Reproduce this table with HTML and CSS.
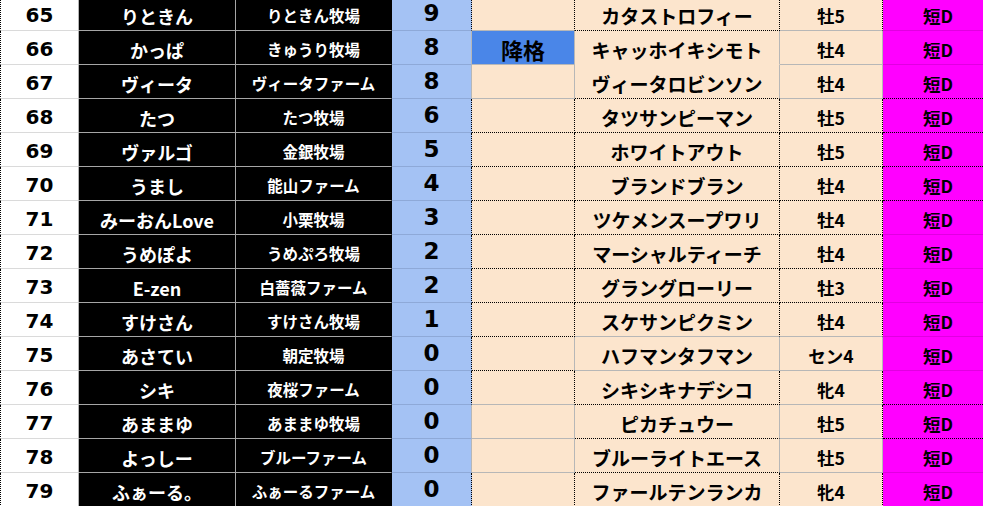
FILE: index.html
```html
<!DOCTYPE html>
<html lang="ja">
<head>
<meta charset="utf-8">
<title>Ranking</title>
<link rel="stylesheet" href="styles.css">
</head>
<body>
<div class="sheet">
  <div class="c num">65</div><div class="c name">りときん</div><div class="c farm">りときん牧場</div><div class="c pts rd">9</div><div class="c st bg rd"></div><div class="c horse bd rd">カタストロフィー</div><div class="c sex bg rd">牡5</div><div class="c cls bm">短D</div>
  <div class="c num">66</div><div class="c name">かっぱ</div><div class="c farm">きゅうり牧場</div><div class="c pts rg">8</div><div class="c st demote bg rg">降格</div><div class="c horse bn rg">キャッホイキシモト</div><div class="c sex bg rg">牡4</div><div class="c cls bm">短D</div>
  <div class="c num">67</div><div class="c name">ヴィータ</div><div class="c farm">ヴィータファーム</div><div class="c pts rg">8</div><div class="c st bg rg"></div><div class="c horse bd rg">ヴィータロビンソン</div><div class="c sex bg rg">牡4</div><div class="c cls bd">短D</div>
  <div class="c num">68</div><div class="c name">たつ</div><div class="c farm">たつ牧場</div><div class="c pts rd">6</div><div class="c st bd rd"></div><div class="c horse bd rd">タツサンピーマン</div><div class="c sex bd rd">牡5</div><div class="c cls bd">短D</div>
  <div class="c num">69</div><div class="c name">ヴァルゴ</div><div class="c farm">金銀牧場</div><div class="c pts rd">5</div><div class="c st bd rd"></div><div class="c horse bd rd">ホワイトアウト</div><div class="c sex bd rd">牡5</div><div class="c cls bd">短D</div>
  <div class="c num">70</div><div class="c name">うまし</div><div class="c farm">能山ファーム</div><div class="c pts rd">4</div><div class="c st bd rd"></div><div class="c horse bd rd">ブランドブラン</div><div class="c sex bd rd">牡4</div><div class="c cls bd">短D</div>
  <div class="c num">71</div><div class="c name">みーおんLove</div><div class="c farm">小栗牧場</div><div class="c pts rd">3</div><div class="c st bd rd"></div><div class="c horse bd rd">ツケメンスープワリ</div><div class="c sex bd rd">牡4</div><div class="c cls bm">短D</div>
  <div class="c num">72</div><div class="c name">うめぽよ</div><div class="c farm">うめぷろ牧場</div><div class="c pts rd">2</div><div class="c st bd rd"></div><div class="c horse bd rd">マーシャルティーチ</div><div class="c sex bd rd">牡4</div><div class="c cls bm">短D</div>
  <div class="c num">73</div><div class="c name">E-zen</div><div class="c farm">白薔薇ファーム</div><div class="c pts rd">2</div><div class="c st bd rd"></div><div class="c horse bd rd">グラングローリー</div><div class="c sex bd rd">牡3</div><div class="c cls bm">短D</div>
  <div class="c num">74</div><div class="c name">すけさん</div><div class="c farm">すけさん牧場</div><div class="c pts rd">1</div><div class="c st bd rd"></div><div class="c horse bg rd">スケサンピクミン</div><div class="c sex bg rd">牡4</div><div class="c cls bm">短D</div>
  <div class="c num">75</div><div class="c name">あさてい</div><div class="c farm">朝定牧場</div><div class="c pts rd">0</div><div class="c st bd rg"></div><div class="c horse bg rg">ハフマンタフマン</div><div class="c sex bg rg">セン4</div><div class="c cls bm">短D</div>
  <div class="c num">76</div><div class="c name">シキ</div><div class="c farm">夜桜ファーム</div><div class="c pts rd">0</div><div class="c st bg rd"></div><div class="c horse bd rd">シキシキナデシコ</div><div class="c sex bg rd">牝4</div><div class="c cls bd">短D</div>
  <div class="c num">77</div><div class="c name">あままゆ</div><div class="c farm">あままゆ牧場</div><div class="c pts rg">0</div><div class="c st bg rg"></div><div class="c horse bd rg">ピカチュウー</div><div class="c sex bg rd">牡5</div><div class="c cls bd">短D</div>
  <div class="c num">78</div><div class="c name">よっしー</div><div class="c farm">ブルーファーム</div><div class="c pts rg">0</div><div class="c st bg rg"></div><div class="c horse bd rg">ブルーライトエース</div><div class="c sex bg rg">牡5</div><div class="c cls bm">短D</div>
  <div class="c num">79</div><div class="c name">ふぁーる。</div><div class="c farm">ふぁーるファーム</div><div class="c pts rd">0</div><div class="c st bn rd"></div><div class="c horse bn rd">ファールテンランカ</div><div class="c sex bn rd">牝4</div><div class="c cls bn">短D</div>
</div>
</body>
</html>
```
FILE: styles.css
```css
html, body {
  margin: 0;
  padding: 0;
  background: #ffffff;
  overflow: hidden;
}
body {
  width: 983px;
  height: 506px;
  font-family: "Noto Sans CJK JP", "Noto Sans", sans-serif;
  font-weight: 700;
}
.sheet {
  display: grid;
  grid-template-columns: 79px 157px 156px 80px 103px 205px 103px 110px;
  grid-auto-rows: 34px;
  margin-top: -3px;
}
.c {
  display: flex;
  align-items: center;
  justify-content: center;
  box-sizing: border-box;
  padding-top: 4px;
  line-height: 1;
  white-space: nowrap;
  border-right: 1px solid transparent;
  border-bottom: 1px solid transparent;
  color: #000;
}
.num {
  background: #ffffff;
  border-left: 1px dotted #000;
  border-right: 1px solid #b4b4b4;
  border-bottom: 1px solid #dadada;
  font-family: "DejaVu Sans", "Noto Sans", sans-serif;
  font-size: 20px;
  padding-top: 3px;
}
.name {
  background: #000;
  color: #fff;
  border-right: 1px solid #a6a6a6;
  border-bottom: 1px solid #a6a6a6;
  font-size: 18px;
}
.farm {
  background: #000;
  color: #fff;
  border-bottom: 1px solid #a6a6a6;
  font-size: 15.5px;
}
.pts {
  background: #a4c2f4;
  border-bottom: 1px solid #8ea9d8;
  font-family: "DejaVu Sans", "Noto Sans", sans-serif;
  font-size: 23px;
  padding-top: 0;
}
.st {
  background: #fce5cd;
}
.st.demote {
  background: #4a86e8;
  font-size: 22px;
  padding-top: 2px;
}
.horse {
  background: #fce5cd;
  font-size: 19px;
}
.sex {
  background: #fce5cd;
  font-size: 17.5px;
}
.cls {
  background: #ff00ff;
  font-size: 17.5px;
  border-right: none;
}
.bd { border-bottom: 1px dotted #000; }
.bg { border-bottom: 1px solid #b7b7b7; }
.bm { border-bottom: 1px solid #e000e0; }
.bn { border-bottom: 1px solid transparent; }
.rd { border-right: 1px dotted #000; }
.rg { border-right: 1px solid #b7b7b7; }
```
